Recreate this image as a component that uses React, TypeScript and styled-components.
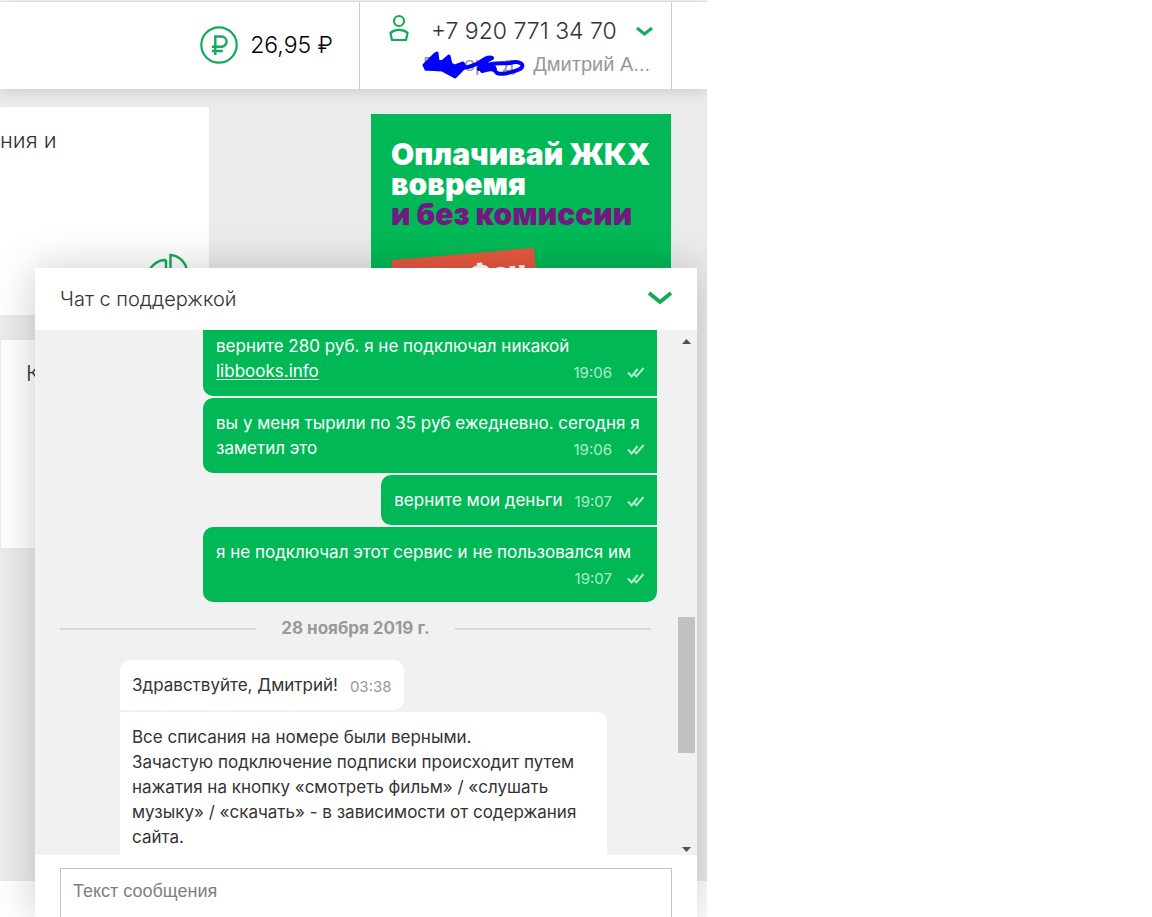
import React from 'react';
import styled, { createGlobalStyle, css } from 'styled-components';

const GREEN = '#00b956';
const ICON_GREEN = '#12ab58';

const GlobalStyle = createGlobalStyle`
  * { box-sizing: border-box; }
  html, body { margin: 0; background: #fff; }
  body {
    font-family: Inter, 'Noto Sans', 'Liberation Sans', sans-serif;
    color: #333;
  }
  button { font: inherit; color: inherit; background: none; border: 0; padding: 0; cursor: pointer; }
`;

const Site = styled.div`
  position: relative;
  display: flex;
  flex-direction: column;
  width: 100%;
  max-width: 707px;
  height: 100vh;
  min-height: 600px;
  overflow: hidden;
`;

const Header = styled.header`
  position: relative;
  display: flex;
  flex: none;
  height: 88px;
  margin-top: 1px;
  border-top: 1px solid #dcdfdf;
  background: #fff;
  box-shadow: 0 0 16px rgba(0, 0, 0, 0.18);
`;

const Balance = styled.div`
  display: flex;
  flex: 1;
  align-items: center;
  justify-content: flex-end;
  gap: 12px;
  padding: 0 26px 2px 0;
  color: #000;
  font-size: 23px;
  font-weight: 300;
  white-space: nowrap;
`;

const Account = styled.div`
  display: flex;
  flex: none;
  align-items: flex-start;
  width: 313px;
  margin-right: 35px;
  padding: 12px 18px 0 29px;
  border: solid #ccc;
  border-width: 0 1px;
`;

const AccountText = styled.div`
  display: flex;
  flex: 1;
  flex-direction: column;
  padding-left: 12px;
`;

const Phone = styled.button`
  display: flex;
  align-items: center;
  justify-content: space-between;
  padding: 0 0 0 10px;
  font-size: 23px;
  font-weight: 300;
  line-height: 34px;
  white-space: nowrap;
`;

const Owner = styled.div`
  position: relative;
  display: flex;
  justify-content: space-between;
  padding: 0 3px 0 2px;
  color: #999;
  font-family: 'Liberation Sans', sans-serif;
  font-size: 20px;
  line-height: 32px;
  white-space: pre;
`;

const Scribble = styled.svg`
  position: absolute;
  left: 1px;
  top: 3px;
`;

const Main = styled.main`
  display: flex;
  flex: 1;
  align-items: flex-start;
  justify-content: space-between;
  padding-right: 36px;
  background: #ebebeb;
`;

const Cards = styled.div`
  display: flex;
  flex-direction: column;
  gap: 25px;
  width: 209px;
  padding-top: 18px;
`;

const Card = styled.section<{ $inset?: boolean }>`
  display: flex;
  flex-direction: column;
  justify-content: space-between;
  align-items: flex-start;
  height: 208px;
  margin-left: ${(p) => (p.$inset ? 1 : 0)}px;
  padding: ${(p) => (p.$inset ? '16px 25px' : '16px 0')};
  background: #fff;
`;

const CardTitle = styled.h2`
  margin: 0;
  font-size: 22px;
  font-weight: 300;
  line-height: 34px;
  white-space: nowrap;
`;

const PieIcon = styled.svg`
  align-self: flex-end;
  margin-right: 20px;
`;

const Banner = styled.a`
  display: block;
  width: 300px;
  height: 400px;
  margin-top: 25px;
  padding: 25px 20px;
  overflow: hidden;
  background: ${GREEN};
  color: #fff;
  font-size: 30px;
  font-weight: 900;
  line-height: 30px;
  text-decoration: none;
  white-space: nowrap;
`;

const BannerAccent = styled.span`
  color: #731982;
`;

const BannerTag = styled.span`
  display: block;
  width: 143px;
  margin: 25px 0 0 2px;
  padding: 0 6px;
  transform: rotate(-5deg);
  background: #e8573f;
  font-size: 27px;
  line-height: 44px;
`;

const Footer = styled.footer`
  flex: none;
  height: 36px;
  background: #fff;
`;

const Chat = styled.section`
  position: absolute;
  left: 35px;
  right: 10px;
  top: 268px;
  bottom: 0;
  display: flex;
  flex-direction: column;
  background: #fff;
  box-shadow: 0 0 40px rgba(0, 0, 0, 0.2);
`;

const ChatHeader = styled.header`
  display: flex;
  flex: none;
  align-items: center;
  justify-content: space-between;
  height: 62px;
  padding: 0 25px;
`;

const ChatTitle = styled.h1`
  margin: 0;
  font-size: 20px;
  font-weight: 300;
  line-height: 30px;
`;

const Scroller = styled.div`
  display: flex;
  flex: 1;
  min-height: 0;
  overflow: hidden;
  background: #f1f1f1;
`;

const Thread = styled.div`
  display: flex;
  flex: 1;
  flex-direction: column;
  align-items: flex-start;
  gap: 2px;
  min-width: 0;
  margin-top: -9px;
  padding: 0 21px 0 25px;
`;

const Bubble = styled.article<{ $mine?: boolean; $wide?: boolean; $first?: boolean; $last?: boolean }>`
  display: flow-root;
  flex: none;
  padding: 13px 12px 12px;
  font-size: 17px;
  line-height: 25px;
  white-space: nowrap;
  ${(p) =>
    p.$mine
      ? css`
          align-self: flex-end;
          width: ${p.$wide ? '454px' : 'auto'};
          padding-left: 13px;
          border-radius: 10px 0 ${p.$last ? '10px' : '0'} 10px;
          background: ${GREEN};
          color: #fff;
        `
      : css`
          margin-left: 60px;
          width: ${p.$wide ? '487px' : 'auto'};
          border-radius: ${p.$first ? '10px' : '0'} 10px 10px 0;
          background: #fff;
        `}
`;

const BubbleLink = styled.a`
  color: inherit;
  text-underline-offset: 2px;
`;

const Meta = styled.span<{ $mine?: boolean }>`
  display: flex;
  float: right;
  align-items: center;
  gap: 15px;
  margin-left: 12px;
  padding-top: 2px;
  color: ${(p) => (p.$mine ? '#b3eacc' : '#999')};
  font-size: 15px;
  line-height: 23px;
`;

const DateRow = styled.div`
  display: flex;
  align-items: center;
  align-self: stretch;
  gap: 25px;
  margin: 12px 6px 17px 0;
  color: #999;
  font-size: 17px;
  font-weight: 700;
  line-height: 25px;
  white-space: nowrap;

  &::before,
  &::after {
    content: '';
    flex: 1;
    height: 2px;
    background: #d8d8d8;
  }
`;

const ScrollBar = styled.div`
  display: flex;
  flex: none;
  flex-direction: column;
  align-items: center;
  justify-content: space-between;
  width: 17px;
  margin-right: 2px;
  padding: 9px 0 3px;
`;

const Thumb = styled.div`
  width: 17px;
  height: 136px;
  margin-top: 178px;
  background: #c1c1c1;
`;

const Composer = styled.form`
  display: flex;
  flex: none;
  height: 62px;
  padding: 13px 25px 0;
  overflow: hidden;
`;

const MessageBox = styled.textarea`
  flex: 1;
  height: 80px;
  padding: 10px 12px;
  border: 1px solid #c4c4c4;
  border-radius: 0;
  resize: none;
  overflow: hidden;
  font-family: 'Liberation Sans', sans-serif;
  font-size: 18px;
  line-height: 24px;

  &::placeholder { color: #808080; opacity: 1; }
`;

const Ticks = () => (
  <svg width="18" height="13" viewBox="0 0 18 13" fill="none" stroke="#b3eacc" strokeWidth="2" aria-hidden="true">
    <path d="M1 6.500 4.600 10.400 10.600 3M7.400 8.400 9.400 10.400 16.600 2" />
  </svg>
);

const Arrow = ({ up }: { up?: boolean }) => (
  <svg width="9" height="5" viewBox="0 0 9 5" fill="#505050" aria-hidden="true">
    <path d={up ? 'M0 5 4.500 0 9 5Z' : 'M0 0 4.500 5 9 0Z'} />
  </svg>
);

const Chevron = ({ width, height, stroke }: { width: number; height: number; stroke: number }) => (
  <svg width={width} height={height} fill="none" stroke={ICON_GREEN} strokeWidth={stroke} aria-hidden="true">
    <path d={`M1 2 ${width / 2} ${height - 3} ${width - 1} 2`} />
  </svg>
);

const Time = ({ value, mine }: { value: string; mine?: boolean }) => (
  <Meta $mine={mine}>
    <time>{value}</time>
    {mine && <Ticks />}
  </Meta>
);

export default function App() {
  return (
    <>
      <GlobalStyle />
      <Site>
        <Header>
          <Balance>
            <svg width="38" height="38" viewBox="0 0 38 38" fill="none" stroke={ICON_GREEN} strokeWidth="2.200" aria-hidden="true">
              <circle cx="19" cy="19" r="17.700" />
              <path d="M15.300 29V10.500H21.500a5 5 0 0 1 0 10.200H11.800M11.800 25H22.800" strokeWidth="2.400" />
            </svg>
            <span>26,95 ₽</span>
          </Balance>
          <Account>
            <svg width="20" height="28" viewBox="0 0 20 28" fill="none" stroke={ICON_GREEN} strokeWidth="2.200" aria-hidden="true">
              <circle cx="10" cy="7" r="5" />
              <path d="M1.400 18.800C6 14.800 14 14.800 18.600 18.800L17 26H3Z" strokeLinejoin="round" />
            </svg>
            <AccountText>
              <Phone type="button">
                +7 920 771 34 70
                <Chevron width={17} height={11} stroke={3} />
              </Phone>
              <Owner>
                <span>{'Б     ор   д'}</span>
                <span>Дмитрий А...</span>
                <Scribble width="106" height="30" viewBox="0 0 106 30" fill="none" stroke="#0000ff" strokeLinejoin="round" strokeLinecap="round" aria-hidden="true">
                  <path d="M2 14 13 3 15 2 16 10 20 11 27 5 29 13 33 15 41 12 43 16 33 26 20 19 4 18Z" fill="#0000ff" strokeWidth="3" />
                  <path d="M40 16C46 18 50 14 55 13C61 9 66 5 70 7C64 10 56 16 57 18C68 10 80 13 88 12C98 9 104 14 98 18C90 22 78 24 75 22C72 18 70 17 60 20" strokeWidth="4" />
                  <path d="M57 17 72 14 74 18 62 19Z" fill="#0000ff" strokeWidth="2" />
                </Scribble>
              </Owner>
            </AccountText>
          </Account>
        </Header>

        <Main>
          <Cards>
            <Card>
              <CardTitle>ния и</CardTitle>
              <PieIcon width="40" height="46" viewBox="0 0 40 46" fill="none" stroke={ICON_GREEN} strokeWidth="2.400" aria-hidden="true">
                <path d="M17 7V26H36M17 7A18 18 0 1 0 34 30" />
                <path d="M21.500 2V22H38A18 18 0 0 0 21.500 2Z" />
              </PieIcon>
            </Card>
            <Card $inset>
              <CardTitle>К</CardTitle>
            </Card>
          </Cards>
          <Banner href="#">
            Оплачивай ЖКХ
            <br />
            вовремя
            <br />
            <BannerAccent>и без комиссии</BannerAccent>
            <BannerTag>МегаФон</BannerTag>
          </Banner>
        </Main>
        <Footer />

        <Chat>
          <ChatHeader>
            <ChatTitle>Чат с поддержкой</ChatTitle>
            <button type="button" aria-label="Свернуть чат">
              <Chevron width={24} height={14} stroke={4} />
            </button>
          </ChatHeader>
          <Scroller>
            <Thread>
              <Bubble $mine $wide>
                верните 280 руб. я не подключал никакой
                <br />
                <BubbleLink href="#">libbooks.info</BubbleLink>
                <Time value="19:06" mine />
              </Bubble>
              <Bubble $mine $wide>
                вы у меня тырили по 35 руб ежедневно. сегодня я
                <br />
                заметил это
                <Time value="19:06" mine />
              </Bubble>
              <Bubble $mine>
                верните мои деньги
                <Time value="19:07" mine />
              </Bubble>
              <Bubble $mine $wide $last>
                я не подключал этот сервис и не пользовался им
                <Time value="19:07" mine />
              </Bubble>
              <DateRow>28 ноября 2019 г.</DateRow>
              <Bubble $first>
                Здравствуйте, Дмитрий!
                <Time value="03:38" />
              </Bubble>
              <Bubble $wide>
                Все списания на номере были верными.
                <br />
                Зачастую подключение подписки происходит путем
                <br />
                нажатия на кнопку «смотреть фильм» / «слушать
                <br />
                музыку» / «скачать» - в зависимости от содержания
                <br />
                сайта.
              </Bubble>
            </Thread>
            <ScrollBar>
              <Arrow up />
              <Thumb />
              <Arrow />
            </ScrollBar>
          </Scroller>
          <Composer>
            <MessageBox aria-label="Текст сообщения" placeholder="Текст сообщения" />
          </Composer>
        </Chat>
      </Site>
    </>
  );
}
